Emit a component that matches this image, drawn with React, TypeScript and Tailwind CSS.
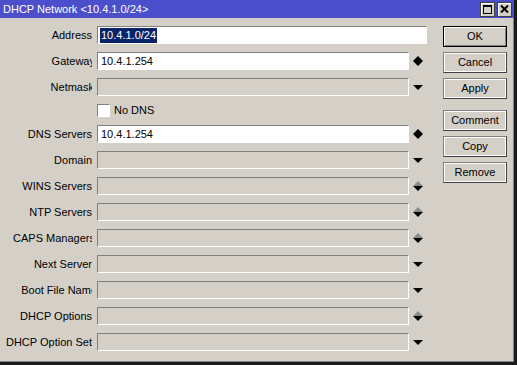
import React from 'react';

type Kind = 'spin' | 'spinOff' | 'drop' | 'none';

interface RowProps {
  label: string;
  value?: string;
  kind: Kind;
  active?: boolean;
  cut?: string;
  wide?: boolean;
  selected?: boolean;
}

const DownArrow: React.FC<{ color?: string }> = ({ color = '#000' }) => (
  <svg width="10" height="5" viewBox="0 0 10 5" className="block">
    <polygon points="0,0 10,0 5,5" fill={color} />
  </svg>
);

const UpArrow: React.FC<{ color?: string }> = ({ color = '#000' }) => (
  <svg width="10" height="5" viewBox="0 0 10 5" className="block">
    <polygon points="0,5 10,5 5,0" fill={color} />
  </svg>
);

const FieldRow: React.FC<RowProps> = ({ label, value, kind, active, cut = 'w-[92px]', wide, selected }) => {
  return (
    <div className="flex items-center h-[18px]">
      <div className="w-[92px] overflow-hidden shrink-0">
        <div className={`${cut} text-right whitespace-nowrap`}>{label}</div>
      </div>
      <div
        className={`ml-[5px] h-[18px] ${wide ? 'w-[330px]' : 'w-[312px]'} border border-t-[#808080] border-l-[#808080] border-r-white border-b-white flex items-center pl-[2px] ${
          active ? 'bg-white' : 'bg-[#d4d0c8]'
        }`}
      >
        {value && (
          <span className={selected ? 'bg-[#0a246a] text-white px-[1px] leading-[15px]' : 'px-[1px]'}>{value}</span>
        )}
      </div>
      {kind !== 'none' && (
        <div className="w-[10px] ml-[4px] flex flex-col items-center">
          {kind === 'spin' && (
            <>
              <UpArrow />
              <DownArrow />
            </>
          )}
          {kind === 'spinOff' && (
            <>
              <UpArrow color="#8b8f89" />
              <DownArrow />
            </>
          )}
          {kind === 'drop' && <DownArrow />}
        </div>
      )}
    </div>
  );
};

const Btn: React.FC<{ label: string; primary?: boolean; className?: string }> = ({ label, primary, className = '' }) => (
  <div
    className={`w-[64px] h-[21px] flex items-center justify-center ${className} ${
      primary
        ? 'border border-black shadow-[inset_1px_1px_0_#ffffff,inset_-1px_-1px_0_#808080]'
        : 'border border-t-[#808080] border-l-[#808080] border-r-[#404040] border-b-[#404040] shadow-[inset_1px_1px_0_#ffffff,inset_-1px_-1px_0_#ffffff]'
    }`}
  >
    {label}
  </div>
);

export default function App() {
  return (
    <div
      className="w-[517px] h-[365px] bg-[#d4d0c8] text-[11px] text-black flex flex-col overflow-hidden border-r-[3px] border-b-[3px] border-r-[#1a1a1a] border-b-[#1a1a1a]"
      style={{ fontFamily: '"Liberation Sans", Arial, sans-serif' }}
    >
      {/* title bar */}
      <div className="h-[18px] bg-[#4b4fcb] flex items-center justify-between pl-[3px] pr-[2px] shrink-0">
        <span className="text-white text-[11px]">DHCP Network &lt;10.4.1.0/24&gt;</span>
        <div className="flex gap-[2px]">
          <div className="w-[15px] h-[15px] bg-[#d4d0c8] border border-[#404040] shadow-[inset_1px_1px_0_#ffffff] flex items-center justify-center">
            <div className="w-[9px] h-[9px] border border-black border-t-2" />
          </div>
          <div className="w-[15px] h-[15px] bg-[#d4d0c8] border border-[#404040] shadow-[inset_1px_1px_0_#ffffff] flex items-center justify-center">
            <svg width="9" height="8" viewBox="0 0 9 8">
              <path d="M1 0.5 L8 7.5 M8 0.5 L1 7.5" stroke="#000" strokeWidth="2" />
            </svg>
          </div>
        </div>
      </div>

      {/* body */}
      <div className="flex flex-1 pt-[8px] border-r border-b border-r-[#808080] border-b-[#808080]">
        <div className="flex flex-col w-[443px]">
          <FieldRow label="Address" value="10.4.1.0/24" kind="none" active wide selected />
          <div className="mt-[8px]">
            <FieldRow label="Gateway" value="10.4.1.254" kind="spin" active cut="w-[95px]" />
          </div>
          <div className="mt-[8px]">
            <FieldRow label="Netmask" kind="drop" cut="w-[94px]" />
          </div>
          <div className="mt-[5px] h-[18px] flex items-center pl-[97px] gap-[4px]">
            <div className="w-[13px] h-[13px] bg-white border border-t-[#808080] border-l-[#808080] border-r-white border-b-white" />
            <span>No DNS</span>
          </div>
          <div className="mt-[6px]">
            <FieldRow label="DNS Servers" value="10.4.1.254" kind="spin" active />
          </div>
          <div className="mt-[8px]">
            <FieldRow label="Domain" kind="drop" />
          </div>
          <div className="mt-[8px]">
            <FieldRow label="WINS Servers" kind="spinOff" />
          </div>
          <div className="mt-[8px]">
            <FieldRow label="NTP Servers" kind="spinOff" />
          </div>
          <div className="mt-[8px]">
            <FieldRow label="CAPS Managers" kind="spinOff" cut="w-[95px]" />
          </div>
          <div className="mt-[8px]">
            <FieldRow label="Next Server" kind="drop" />
          </div>
          <div className="mt-[8px]">
            <FieldRow label="Boot File Name" kind="drop" cut="w-[97px]" />
          </div>
          <div className="mt-[8px]">
            <FieldRow label="DHCP Options" kind="spinOff" />
          </div>
          <div className="mt-[8px]">
            <FieldRow label="DHCP Option Set" kind="drop" />
          </div>
        </div>

        <div className="flex flex-col">
          <Btn label="OK" primary />
          <Btn label="Cancel" className="mt-[5px]" />
          <Btn label="Apply" className="mt-[5px]" />
          <Btn label="Comment" className="mt-[11px]" />
          <Btn label="Copy" className="mt-[5px]" />
          <Btn label="Remove" className="mt-[5px]" />
        </div>
      </div>
    </div>
  );
}
